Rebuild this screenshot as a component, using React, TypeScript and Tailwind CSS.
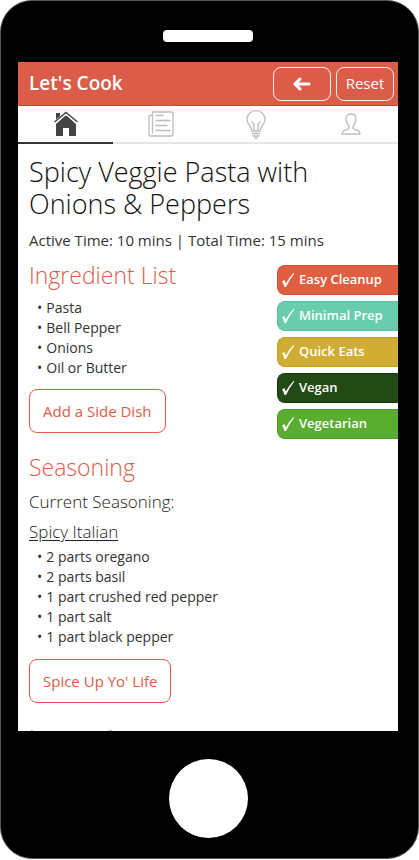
import React from 'react';

const tags = [
  { label: 'Easy Cleanup', tone: 'bg-[#e05f43] border-[#d8502f]' },
  { label: 'Minimal Prep', tone: 'bg-[#68ccad] border-[#5bc0a0]' },
  { label: 'Quick Eats', tone: 'bg-[#d0ad33] border-[#c39f25]' },
  { label: 'Vegan', tone: 'bg-[#234a15] border-[#143a08]' },
  { label: 'Vegetarian', tone: 'bg-[#5aad2f] border-[#4c9f22]' },
];

const ingredients = ['Pasta', 'Bell Pepper', 'Onions', 'Oil or Butter'];
const seasoning = ['2 parts oregano', '2 parts basil', '1 part crushed red pepper', '1 part salt', '1 part black pepper'];

function HomeIcon() {
  return (
    <svg width="26" height="26" viewBox="0 0 26 26" fill="none">
      <path d="M3 13 13 4l10 9v12h-7v-8h-6v8H3z" fill="#444" />
      <path d="M1 11.500 13 1.500l12 10" stroke="#fff" strokeWidth="4" />
      <path d="M3 2h4v3L3 8.500z" fill="#444" />
      <path d="M1.500 11 13 1.500 24.500 11" stroke="#444" strokeWidth="1.400" />
    </svg>
  );
}

function RecipeIcon() {
  return (
    <svg width="26" height="26" viewBox="0 0 26 26" fill="none" stroke="#bdbdbd" strokeWidth="1.300" strokeLinecap="round">
      <path d="M4.500 1H23q2 0 2 2v20q0 2-2 2H3q-2 0-2-2V6q0-1.500 2-1.500h1.500zM4.500 4.500V22" />
      <path d="M8 4.500h7M8 9.500h14M8 14.500h11M8 19.500h14" />
    </svg>
  );
}

function BulbIcon() {
  return (
    <svg width="20" height="29" viewBox="0 0 20 29" fill="none" stroke="#bdbdbd" strokeWidth="1.300" strokeLinecap="round">
      <path d="M6 21C6 17 1 14.500 1 9.500a9 8.800 0 0 1 18 0C19 14.500 14 17 14 21z" />
      <path d="M8 20.500v-6L6 11.500M12 20.500v-6l2-3" />
      <path d="M6.500 23.500h7M7 26h6M9 28h2" strokeWidth="1.500" />
    </svg>
  );
}

function ProfileIcon() {
  return (
    <svg width="20" height="22" viewBox="0 0 20 22" fill="none" stroke="#bdbdbd" strokeWidth="1.300" strokeLinejoin="round">
      <path d="M1 21c0-3 2-3.500 5-4.500 2-.7 2.500-1.500 2-3C6 11 5 8.500 5 5.500 5 2.500 7 1 10 1s5 1.500 5 4.500c0 3-1 5.500-3 8-.5 1.500 0 2.300 2 3 3 1 5 1.500 5 4.500z" />
    </svg>
  );
}

function BackArrow() {
  return (
    <svg width="18" height="14" viewBox="0 0 18 14" fill="none" stroke="#fff" strokeWidth="3" strokeLinecap="round" strokeLinejoin="round">
      <path d="M2 7h14M7 2 2 7l5 5" />
    </svg>
  );
}

function Check() {
  return (
    <svg width="14" height="16" viewBox="0 0 14 16" fill="#fff">
      <path d="M1 9.500 3.500 8l1.300 3.500Q8.500 5 12.500 1l.8.500Q8.500 7.500 5 15H3.500Q2.500 11.500 1 9.500z" />
    </svg>
  );
}

const tabs = [
  { name: 'Home', icon: <HomeIcon /> },
  { name: 'Recipe', icon: <RecipeIcon /> },
  { name: 'Tips', icon: <BulbIcon /> },
  { name: 'Profile', icon: <ProfileIcon /> },
];

function SectionTitle({ children }: { children: React.ReactNode }) {
  return <h2 className="text-[23px] leading-5 font-light text-[#dc5c49]">{children}</h2>;
}

function BulletList({ items }: { items: string[] }) {
  return (
    <ul className="pl-2 text-sm leading-5 text-[#333]">
      {items.map((item) => (
        <li key={item} className="flex gap-1">
          <span aria-hidden="true">•</span>
          {item}
        </li>
      ))}
    </ul>
  );
}

function OutlineButton({ children }: { children: React.ReactNode }) {
  return (
    <button className="h-11 rounded-lg border border-[#dc5c49] px-[13px] text-[15px] text-[#dc5c49]">{children}</button>
  );
}

export default function App() {
  return (
    <div className="bg-white font-['Open_Sans','Noto_Sans',sans-serif]">
      <div className="flex h-[859px] flex-col rounded-[32px] border border-[#555] bg-black pr-5 pl-[17px]">
        <div className="flex h-[61px] shrink-0 items-start justify-center pt-[29px]">
          <div className="h-3 w-[90px] rounded bg-white" />
        </div>

        <main className="flex min-h-0 flex-1 flex-col overflow-hidden bg-white">
          <header className="flex h-11 shrink-0 items-center gap-[5px] border-b border-[#c94832] bg-[#da5c49] pr-1 pl-[11px] text-white">
            <div className="flex-1 text-[19px] font-semibold">Let's Cook</div>
            <button aria-label="Back" className="flex h-[34px] w-[58px] items-center justify-center rounded-lg border border-white/90">
              <BackArrow />
            </button>
            <button className="h-[34px] w-[58px] rounded-lg border border-white/90 text-[15px]">Reset</button>
          </header>

          <nav className="grid h-[38px] shrink-0 grid-cols-4">
            {tabs.map((tab, i) => (
              <button
                key={tab.name}
                aria-label={tab.name}
                className={`flex items-center justify-center border-b-2 ${i === 0 ? 'border-[#333]' : 'border-[#e6e6e6]'}`}
              >
                {tab.icon}
              </button>
            ))}
          </nav>

          <div className="min-h-0 flex-1 overflow-hidden pt-3 pl-[11px]">
            <h1 className="text-[27px] leading-8 font-light text-[#111]">Spicy Veggie Pasta with Onions &amp; Peppers</h1>
            <p className="mt-[10px] text-[15px] leading-5 text-[#333]">Active Time: 10 mins | Total Time: 15 mins</p>

            <div className="mt-[15px] flex justify-between">
              <section>
                <SectionTitle>Ingredient List</SectionTitle>
                <div className="mt-[13px] mb-[11px]">
                  <BulletList items={ingredients} />
                </div>
                <OutlineButton>Add a Side Dish</OutlineButton>
              </section>
              <ul className="flex w-[121px] flex-col gap-1.5">
                {tags.map((tag) => (
                  <li key={tag.label} className={`flex h-[30px] items-center gap-1 rounded-l-lg border border-r-0 pl-[3px] text-[13px] font-semibold text-white ${tag.tone}`}>
                    <Check />
                    {tag.label}
                  </li>
                ))}
              </ul>
            </div>

            <section className="mt-[18px]">
              <SectionTitle>Seasoning</SectionTitle>
              <p className="mt-[15px] text-[17px] leading-5 font-light text-[#222]">Current Seasoning:</p>
              <h3 className="mt-[10px] text-[17px] leading-5 font-light text-[#222] underline underline-offset-2">Spicy Italian</h3>
              <div className="mt-[5px] mb-3">
                <BulletList items={seasoning} />
              </div>
              <OutlineButton>Spice Up Yo' Life</OutlineButton>
            </section>

            <section className="mt-[25px]">
              <SectionTitle>Instructions</SectionTitle>
            </section>
          </div>
        </main>

        <footer className="flex h-[127px] shrink-0 items-start justify-center pt-7">
          <button aria-label="Home" className="size-[79px] rounded-full bg-white" />
        </footer>
      </div>
    </div>
  );
}
